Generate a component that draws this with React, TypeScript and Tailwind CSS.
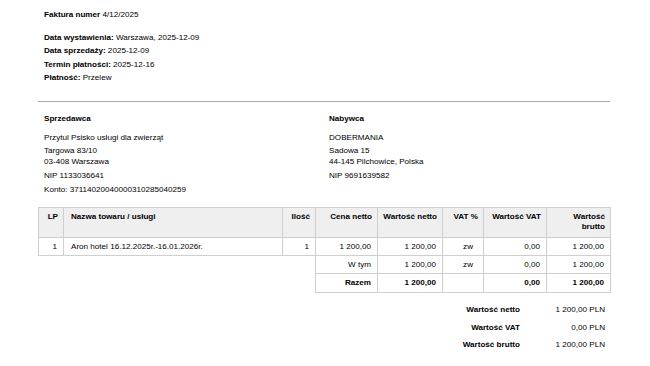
import React from 'react';

const cell = 'border border-[#cfcfcf] px-[6px] align-middle';
const head = 'border border-[#cfcfcf] px-[5px] pt-[4px] align-top font-bold bg-[#efefef] whitespace-nowrap';

const Party: React.FC<{ title: string; name: string; addr: string[]; nip: string; konto?: string }> = ({ title, name, addr, nip, konto }) => (
    <div className="flex-1 pl-[4px]">
        <p className="font-bold leading-[13px]">{title}</p>
        <p className="mt-[6px] leading-[13px]">{name}</p>
        <div className="leading-[11px] mt-[1px]">
            {addr.map(a => <p key={a}>{a}</p>)}
        </div>
        <p className="mt-[2px] leading-[13px]">{nip}</p>
        {konto && <p className="mt-[1px] leading-[13px]">{konto}</p>}
    </div>
);

export default function App() {
    return (
        <div className="w-[650px] h-[366px] bg-white text-black text-[8.1px] px-[40px] pt-[8px] overflow-hidden" style={{ fontFamily: '"Liberation Sans", Arial, sans-serif' }}>
            <div className="pl-[4px]">
                <p className="leading-[13px]"><span className="font-bold">Faktura numer</span> 4/12/2025</p>
                <div className="mt-[10px] leading-[13.3px]">
                    <p><span className="font-bold">Data wystawienia:</span> Warszawa, 2025-12-09</p>
                    <p><span className="font-bold">Data sprzedaży:</span> 2025-12-09</p>
                    <p><span className="font-bold">Termin płatności:</span> 2025-12-16</p>
                    <p><span className="font-bold">Płatność:</span> Przelew</p>
                </div>
            </div>

            <div className="mt-[17px] -ml-[2px] h-px bg-[#a8a8a8]" />

            <div className="flex mt-[10px]">
                <Party title="Sprzedawca" name="Przytul Psisko usługi dla zwierząt" addr={['Targowa 83/10', '03-408 Warszawa']} nip="NIP 1133036641" konto="Konto: 37114020040000310285040259" />
                <Party title="Nabywca" name="DOBERMANIA" addr={['Sadowa 15', '44-145 Pilchowice, Polska']} nip="NIP 9691639582" />
            </div>

            <table className="mt-[11px] -ml-[2px] w-[572px] table-fixed border-collapse">
                <colgroup>
                    <col className="w-[25px]" />
                    <col className="w-[219px]" />
                    <col className="w-[33px]" />
                    <col className="w-[62px]" />
                    <col className="w-[65px]" />
                    <col className="w-[41px]" />
                    <col className="w-[63px]" />
                    <col className="w-[64px]" />
                </colgroup>
                <thead>
                    <tr className="h-[30px] leading-[10px]">
                        <th className={`${head} text-right`}>LP</th>
                        <th className={`${head} text-left pl-[7px]`}>Nazwa towaru / usługi</th>
                        <th className={`${head} text-right`}>Ilość</th>
                        <th className={`${head} text-right`}>Cena netto</th>
                        <th className={`${head} text-right`}>Wartość netto</th>
                        <th className={`${head} text-right`}>VAT %</th>
                        <th className={`${head} text-right`}>Wartość VAT</th>
                        <th className={`${head} text-right`}>Wartość<br />brutto</th>
                    </tr>
                </thead>
                <tbody>
                    <tr className="h-[18px]">
                        <td className={`${cell} text-right`}>1</td>
                        <td className={`${cell} pl-[7px]`}>Aron hotel 16.12.2025r.-16.01.2026r.</td>
                        <td className={`${cell} text-right`}>1</td>
                        <td className={`${cell} text-right`}>1 200,00</td>
                        <td className={`${cell} text-right`}>1 200,00</td>
                        <td className={`${cell} text-right pr-[10px]`}>zw</td>
                        <td className={`${cell} text-right`}>0,00</td>
                        <td className={`${cell} text-right`}>1 200,00</td>
                    </tr>
                    <tr className="h-[18px]">
                        <td colSpan={3} />
                        <td className={`${cell} text-right`}>W tym</td>
                        <td className={`${cell} text-right`}>1 200,00</td>
                        <td className={`${cell} text-right pr-[10px]`}>zw</td>
                        <td className={`${cell} text-right`}>0,00</td>
                        <td className={`${cell} text-right`}>1 200,00</td>
                    </tr>
                    <tr className="h-[19px] font-bold">
                        <td colSpan={3} />
                        <td className={`${cell} text-right`}>Razem</td>
                        <td className={`${cell} text-right`}>1 200,00</td>
                        <td className={cell} />
                        <td className={`${cell} text-right`}>0,00</td>
                        <td className={`${cell} text-right`}>1 200,00</td>
                    </tr>
                </tbody>
            </table>

            <div className="flex justify-end mt-[11px] pr-[5px]">
                <div className="grid grid-cols-[auto_85px] gap-y-[6px] leading-[11.5px]">
                    <p className="font-bold text-right">Wartość netto</p>
                    <p className="text-right">1 200,00 PLN</p>
                    <p className="font-bold text-right">Wartość VAT</p>
                    <p className="text-right">0,00 PLN</p>
                    <p className="font-bold text-right">Wartość brutto</p>
                    <p className="text-right">1 200,00 PLN</p>
                </div>
            </div>
        </div>
    );
}
